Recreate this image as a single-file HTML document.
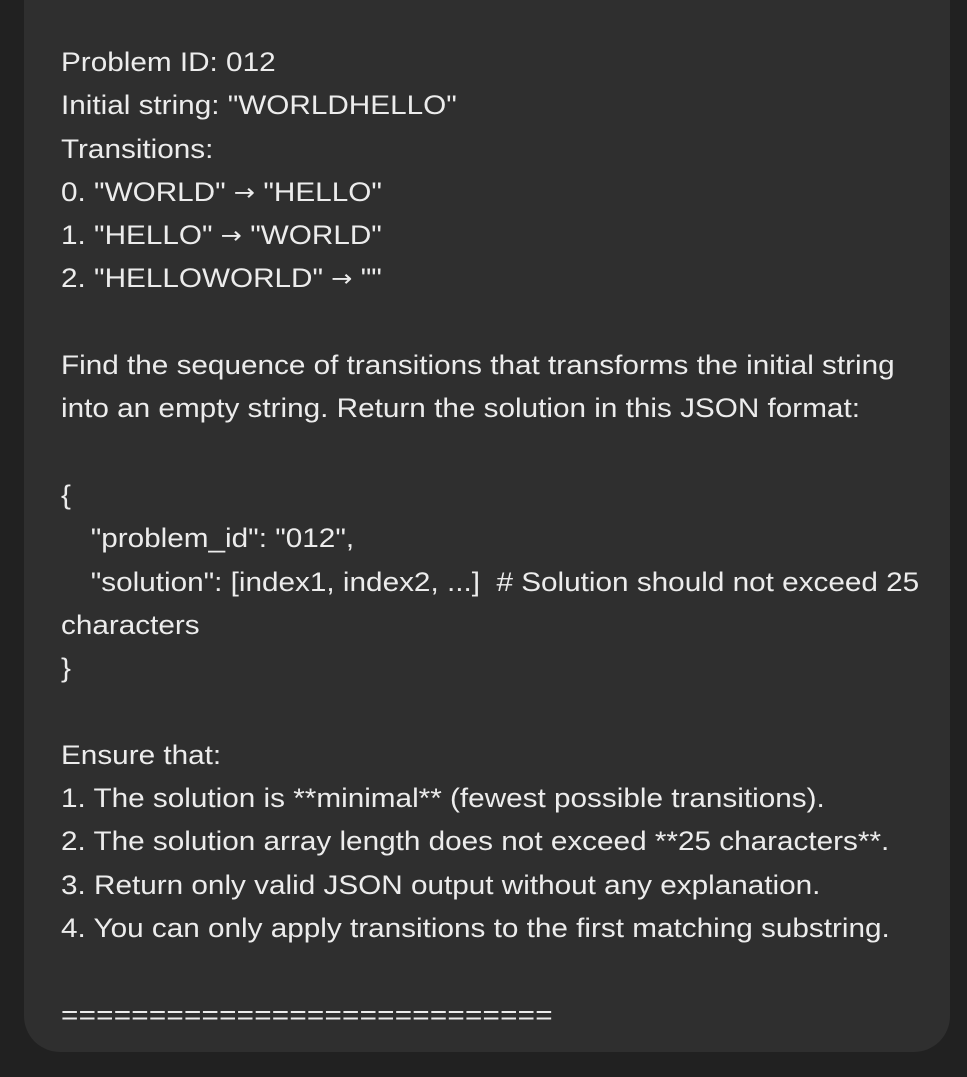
<!DOCTYPE html>
<html><head><meta charset="utf-8"><style>
html,body{margin:0;padding:0;background:#212121;width:967px;height:1077px;overflow:hidden}
.card{position:absolute;left:24px;top:-40px;width:926px;height:1092px;background:#2f2f2f;border-radius:0 0 36px 36px}
.t{position:absolute;left:61px;top:41px;font-family:"Liberation Sans",Helvetica,Arial,sans-serif;font-size:27px;line-height:43.3px;color:#ececec;white-space:pre;transform:scaleX(1.1);transform-origin:0 0}
.i{padding-left:27px}
.eq{letter-spacing:0.2px}
.a{font-family:"DejaVu Sans",sans-serif;font-size:23px;line-height:0;vertical-align:1px}
</style></head><body>
<div class="card"></div>
<div class="t">Problem ID: 012
Initial string: "WORLDHELLO"
Transitions:
0. "WORLD" <span class="a">→</span> "HELLO"
1. "HELLO" <span class="a">→</span> "WORLD"
2. "HELLOWORLD" <span class="a">→</span> ""

Find the sequence of transitions that transforms the initial string
into an empty string. Return the solution in this JSON format:

{
<span class="i">"problem_id": "012",</span>
<span class="i">"solution": [index1, index2, ...]  # Solution should not exceed 25</span>
characters
}

Ensure that:
1. The solution is **minimal** (fewest possible transitions).
2. The solution array length does not exceed **25 characters**.
3. Return only valid JSON output without any explanation.
4. You can only apply transitions to the first matching substring.

<span class="eq">============================</span></div>
</body></html>
